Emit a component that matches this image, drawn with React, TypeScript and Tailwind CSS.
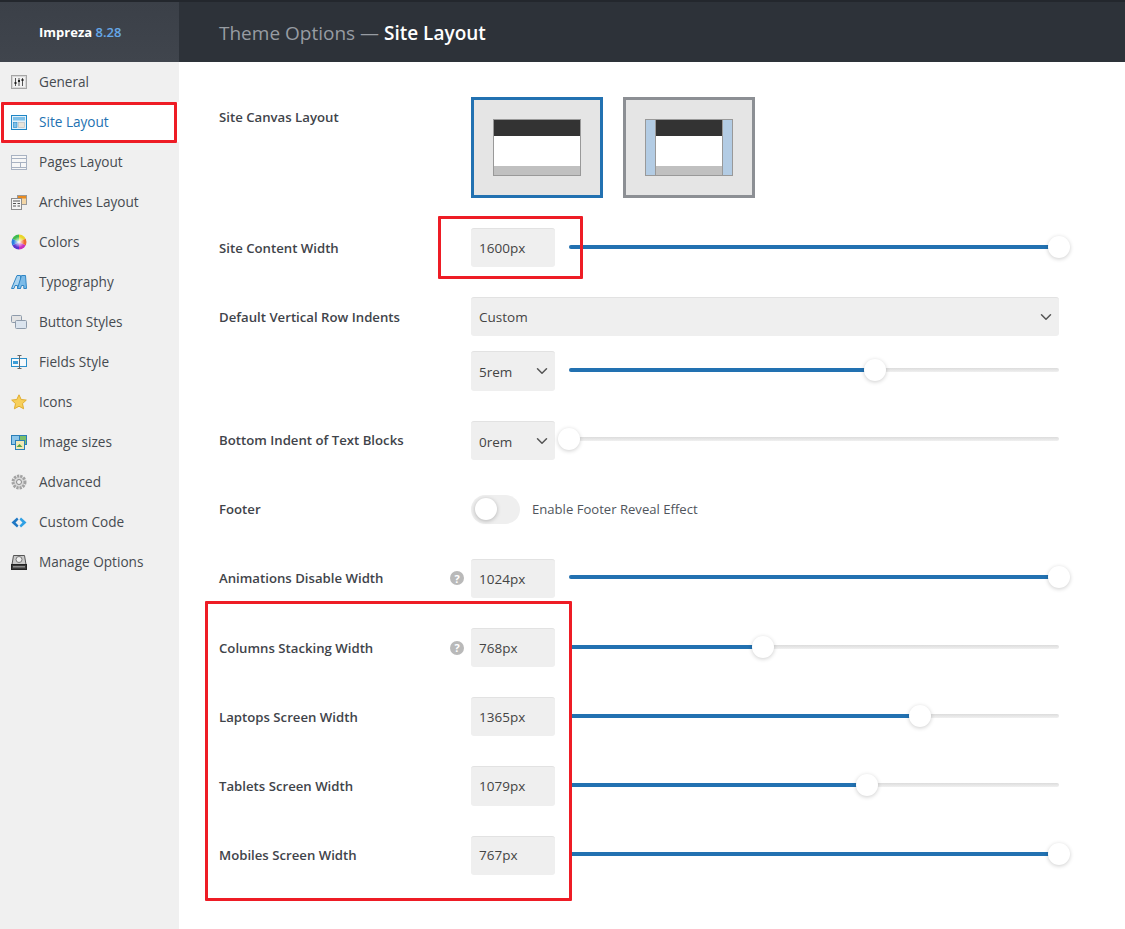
import { ReactNode } from 'react';
import { ChevronDown } from 'lucide-react';

const navItems: { label: string; icon: ReactNode; active?: boolean }[] = [
  {
    label: 'General',
    icon: (
      <svg width="16" height="14" viewBox="0 0 16 14">
        <rect x="0.5" y="0.5" width="15" height="13" fill="#d9d9d9" stroke="#a6a6a6" />
        <rect x="2" y="2" width="12" height="10" fill="#f2f2f2" />
        <path d="M4.5 3v8M8 3v8M11.5 3v8" stroke="#555" strokeWidth="1" />
        <path d="M3.5 8h2M7 6h2M10.5 5h2" stroke="#222" strokeWidth="2" />
      </svg>
    ),
  },
  {
    label: 'Site Layout',
    active: true,
    icon: (
      <svg width="16" height="15" viewBox="0 0 16 15">
        <rect x="0.5" y="0.5" width="15" height="14" fill="#e3f1fa" stroke="#1f86c6" />
        <rect x="2" y="2" width="12" height="3.5" fill="#7fc0e8" />
        <rect x="2.5" y="7.5" width="3.5" height="5" fill="#7fc0e8" stroke="#1f86c6" strokeWidth="0.6" />
        <rect x="7.5" y="7.5" width="6" height="5" fill="#e8e4da" stroke="#b9b9b9" strokeWidth="0.6" />
      </svg>
    ),
  },
  {
    label: 'Pages Layout',
    icon: (
      <svg width="16" height="15" viewBox="0 0 16 15">
        <rect x="0.5" y="0.5" width="15" height="14" fill="#f7f7f7" stroke="#a8b2c2" />
        <path d="M1 3.5h14M1 7.5h14M1 12.5h14M9.5 7.5v5" stroke="#a8b2c2" />
      </svg>
    ),
  },
  {
    label: 'Archives Layout',
    icon: (
      <svg width="16" height="15" viewBox="0 0 16 15">
        <rect x="6.5" y="0.5" width="9" height="9" fill="#f3d6a6" stroke="#9a9a9a" />
        <rect x="7" y="1" width="8" height="2.5" fill="#e88a1f" />
        <rect x="0.5" y="3.5" width="10" height="11" fill="#f5f5f5" stroke="#8d8d8d" />
        <path d="M2 6h7M2 8.5h3M2 11h3M6.5 8.5h2.5M6.5 11h2.5" stroke="#555" />
      </svg>
    ),
  },
  {
    label: 'Colors',
    icon: (
      <svg width="16" height="16" viewBox="0 0 16 16">
        <defs>
          <clipPath id="wheel-clip">
            <circle cx="8" cy="8" r="7.5" />
          </clipPath>
          <radialGradient id="wheel-shine">
            <stop offset="0%" stopColor="#ffffff" stopOpacity="1" />
            <stop offset="100%" stopColor="#ffffff" stopOpacity="0" />
          </radialGradient>
        </defs>
        <g clipPath="url(#wheel-clip)">
          <path d="M8 8L8 0H16V4Z" fill="#e9d62c" />
          <path d="M8 8L16 4V12Z" fill="#ef6a2e" />
          <path d="M8 8L16 12V16H8Z" fill="#c92fc0" />
          <path d="M8 8V16H0V12Z" fill="#5a35d0" />
          <path d="M8 8L0 12V4Z" fill="#2b7fe0" />
          <path d="M8 8L0 4V0H8Z" fill="#3fbb4e" />
        </g>
        <circle cx="8" cy="8" r="5.5" fill="url(#wheel-shine)" />
      </svg>
    ),
  },
  {
    label: 'Typography',
    icon: (
      <svg width="16" height="16" viewBox="0 0 16 16">
        <path d="M0.5 14.5L6 1.5H9.5V14.5H6.5V11.5H4L3 14.5Z" fill="#a9d3f0" stroke="#2f85c4" />
        <path d="M6.5 14.5L10.5 1.5H14.5L15.5 14.5H12.8V11.5H10.5L9.5 14.5Z" fill="#7cbbe8" stroke="#2f85c4" />
      </svg>
    ),
  },
  {
    label: 'Button Styles',
    icon: (
      <svg width="16" height="14" viewBox="0 0 16 14">
        <rect x="0.5" y="0.5" width="10" height="7" rx="1" fill="#e4e4e4" stroke="#8e9bab" />
        <rect x="4.5" y="5.5" width="11" height="8" rx="1" fill="#dbe4ee" stroke="#8e9bab" />
      </svg>
    ),
  },
  {
    label: 'Fields Style',
    icon: (
      <svg width="16" height="14" viewBox="0 0 16 14">
        <rect x="0.5" y="3.5" width="15" height="8" fill="#f4f9fc" stroke="#2a8fcb" />
        <rect x="2" y="6" width="5" height="3" fill="#3d9ed8" />
        <path d="M8.5 1v12M6.5 0.5h4M6.5 13.5h4" stroke="#666" />
      </svg>
    ),
  },
  {
    label: 'Icons',
    icon: (
      <svg width="16" height="16" viewBox="0 0 16 16">
        <path
          d="M8 0.8L10.2 5.5L15.3 6.1L11.5 9.6L12.6 14.8L8 12.2L3.4 14.8L4.5 9.6L0.7 6.1L5.8 5.5Z"
          fill="#f7cf5a"
          stroke="#e0ac2e"
        />
      </svg>
    ),
  },
  {
    label: 'Image sizes',
    icon: (
      <svg width="16" height="15" viewBox="0 0 16 15">
        <rect x="0.5" y="0.5" width="8" height="9" fill="#8cc6ea" stroke="#2a7fb8" />
        <rect x="8.5" y="0.5" width="7" height="9" fill="#7bbf6a" stroke="#2a7fb8" />
        <rect x="4.5" y="5.5" width="9" height="9" fill="#f2e9b6" stroke="#2a7fb8" />
        <path d="M5.5 12l3-3 3 3z" fill="#58a446" />
      </svg>
    ),
  },
  {
    label: 'Advanced',
    icon: (
      <svg width="16" height="16" viewBox="0 0 16 16">
        <circle cx="8" cy="8" r="6" fill="#dadada" stroke="#a2a2a2" strokeDasharray="2.2 1" strokeWidth="3" />
        <circle cx="8" cy="8" r="2.5" fill="#efefef" stroke="#8a8a8a" />
      </svg>
    ),
  },
  {
    label: 'Custom Code',
    icon: (
      <svg width="16" height="11" viewBox="0 0 16 11">
        <path d="M6 0.5L0.5 5.5L6 10.5L7.5 8.5L4.5 5.5L7.5 2.5Z" fill="#1f78c4" />
        <path d="M10 0.5L15.5 5.5L10 10.5L8.5 8.5L11.5 5.5L8.5 2.5Z" fill="#2fa0e4" />
      </svg>
    ),
  },
  {
    label: 'Manage Options',
    icon: (
      <svg width="16" height="15" viewBox="0 0 16 15">
        <path d="M2.5 0.5H13.5L15 9.5H1Z" fill="#c9c9c9" stroke="#555" />
        <circle cx="8" cy="4.5" r="3" fill="#efefef" stroke="#777" />
        <rect x="0.5" y="9.5" width="15" height="5" fill="#3a3a3a" stroke="#222" />
        <rect x="2" y="11" width="12" height="1.5" fill="#8d8d8d" />
      </svg>
    ),
  },
];

function Sidebar() {
  return (
    <aside className="w-[179px] shrink-0 bg-[#f0f0f0]">
      <div className="flex h-[62px] items-center border-t-2 border-[#23272d] bg-gradient-to-b from-[#3b4048] to-[#40454d] pl-[39px] pt-[2px] text-[13px] font-bold text-white">
        Impreza&nbsp;<span className="font-semibold text-[#66a8e8]">8.28</span>
      </div>
      <nav>
        {navItems.map((item) => (
          <div
            key={item.label}
            className={`flex h-10 items-center text-[13.6px] font-medium ${
              item.active ? 'bg-white text-[#2271b1]' : 'text-[#464b51]'
            }`}
          >
            <span className="flex w-[39px] justify-start pl-[11px]">{item.icon}</span>
            <span>{item.label}</span>
          </div>
        ))}
      </nav>
    </aside>
  );
}

function Field({ children }: { children: ReactNode }) {
  return (
    <div className="flex h-[39.2px] w-[84px] shrink-0 items-center rounded-[3px] border-t border-[#e2e2e2] bg-[#efefef] pl-2 text-[13.5px] text-[#444]">
      {children}
    </div>
  );
}

function SmallSelect({ value }: { value: string }) {
  return (
    <div className="flex h-[39.2px] w-[84px] shrink-0 items-center justify-between rounded-[3px] border-t border-[#e2e2e2] bg-[#efefef] pl-2 pr-[4px] text-[13.5px] text-[#444]">
      <span className="pt-[2px]">{value}</span>
      <ChevronDown size={18} strokeWidth={2} className="text-[#555]" />
    </div>
  );
}

function Slider({ percent }: { percent: number }) {
  return (
    <div className="relative mb-[2px] ml-[14px] h-[4px] flex-1 rounded-full bg-gradient-to-b from-[#dcdcdc] to-[#f0f0f0]">
      <div className="h-full rounded-full bg-[#2271b1]" style={{ width: `${percent}%` }} />
      <div
        className="absolute top-1/2 h-[22px] w-[22px] -translate-x-1/2 -translate-y-1/2 rounded-full bg-white shadow-[0_1px_4px_rgba(0,0,0,0.2)]"
        style={{ left: `${percent}%` }}
      />
    </div>
  );
}

function HelpIcon() {
  return (
    <span className="absolute right-[7px] top-1/2 flex h-[14px] w-[14px] -translate-y-1/2 items-center justify-center rounded-full bg-[#b9b9b9] text-[11px] font-bold leading-none text-white">
      ?
    </span>
  );
}

function Row({ label, help, children }: { label: string; help?: boolean; children: ReactNode }) {
  return (
    <div className="flex items-center">
      <div className="relative flex h-[39.2px] w-[252px] shrink-0 items-center pt-[2px] text-[13.2px] font-semibold text-[#3f444a]">
        {label}
        {help && <HelpIcon />}
      </div>
      <div className="flex flex-1 items-center">{children}</div>
    </div>
  );
}

function CanvasTile({ selected, sides }: { selected?: boolean; sides?: boolean }) {
  return (
    <div
      className={`flex h-[101px] w-[131.5px] items-center justify-center border-[3px] bg-[#e5e5e5] ${
        selected ? 'border-[#2271b1]' : 'border-[#8c8f94]'
      }`}
    >
      <div className="flex h-[57px] w-[87.5px] border border-[#999] bg-white">
        {sides && <div className="w-[10px] border-r border-[#999] bg-[#b3cce4]" />}
        <div className="flex flex-1 flex-col">
          <div className="h-[16px] bg-[#333]" />
          <div className="flex-1 bg-white" />
          <div className="h-[9px] bg-[#c0c0c0]" />
        </div>
        {sides && <div className="w-[10px] border-l border-[#999] bg-[#b3cce4]" />}
      </div>
    </div>
  );
}

export default function App() {
  return (
    <div
      className="relative flex h-[929px] w-[1125px] overflow-hidden bg-white text-[#444]"
      style={{ fontFamily: '"Open Sans", "Noto Sans", sans-serif' }}
    >
      <Sidebar />
      <div className="flex-1">
        <header className="flex h-[62px] items-center border-t-2 border-[#23272d] bg-[#2d3239] pl-10 pt-[2px] text-[19px] text-[#979ca2]">
          Theme Options —&nbsp;<span className="font-semibold text-white">Site Layout</span>
        </header>
        <main className="flex flex-col gap-[30px] pl-10 pr-[66px] pt-[35px]">
          <div className="flex items-start">
            <div className="w-[252px] shrink-0 pt-[11px] text-[13.2px] font-semibold text-[#3f444a]">
              Site Canvas Layout
            </div>
            <div className="flex gap-[20.5px]">
              <CanvasTile selected />
              <CanvasTile sides />
            </div>
          </div>
          <Row label="Site Content Width">
            <Field>1600px</Field>
            <Slider percent={100} />
          </Row>
          <div className="flex flex-col gap-[15px]">
            <Row label="Default Vertical Row Indents">
              <div className="flex h-[39.2px] flex-1 items-center justify-between rounded-[3px] border-t border-[#e2e2e2] bg-[#efefef] pl-2 pr-[4px] text-[13.5px] text-[#444]">
                Custom
                <ChevronDown size={18} strokeWidth={2} className="text-[#555]" />
              </div>
            </Row>
            <Row label="">
              <SmallSelect value="5rem" />
              <Slider percent={62.5} />
            </Row>
          </div>
          <Row label="Bottom Indent of Text Blocks">
            <SmallSelect value="0rem" />
            <Slider percent={0} />
          </Row>
          <div className="my-[5px] flex items-center">
            <div className="w-[252px] shrink-0 pt-[2px] text-[13.2px] font-semibold text-[#3f444a]">Footer</div>
            <div className="flex items-center">
              <div className="flex h-[29px] w-[49px] items-center rounded-full bg-[#efefef] pl-[4px]">
                <div className="h-[22px] w-[22px] rounded-full bg-white shadow-[0_1px_4px_rgba(0,0,0,0.25)]" />
              </div>
              <span className="ml-3 pt-[2px] text-[13.1px] text-[#50555c]">Enable Footer Reveal Effect</span>
            </div>
          </div>
          <Row label="Animations Disable Width" help>
            <Field>1024px</Field>
            <Slider percent={100} />
          </Row>
          <Row label="Columns Stacking Width" help>
            <Field>768px</Field>
            <Slider percent={39.6} />
          </Row>
          <Row label="Laptops Screen Width">
            <Field>1365px</Field>
            <Slider percent={71.7} />
          </Row>
          <Row label="Tablets Screen Width">
            <Field>1079px</Field>
            <Slider percent={60.8} />
          </Row>
          <Row label="Mobiles Screen Width">
            <Field>767px</Field>
            <Slider percent={100} />
          </Row>
        </main>
      </div>

      {/* red annotation boxes drawn over the screenshot */}
      <div className="absolute left-[1px] top-[102px] h-[41px] w-[176px] rounded-[1px] border-[3px] border-[#ee1c25]" />
      <div className="absolute left-[438px] top-[216px] h-[63px] w-[145px] rounded-[1px] border-[3px] border-[#ee1c25]" />
      <div className="absolute left-[205px] top-[601px] h-[300px] w-[367px] rounded-[1px] border-[3px] border-[#ee1c25]" />
    </div>
  );
}
